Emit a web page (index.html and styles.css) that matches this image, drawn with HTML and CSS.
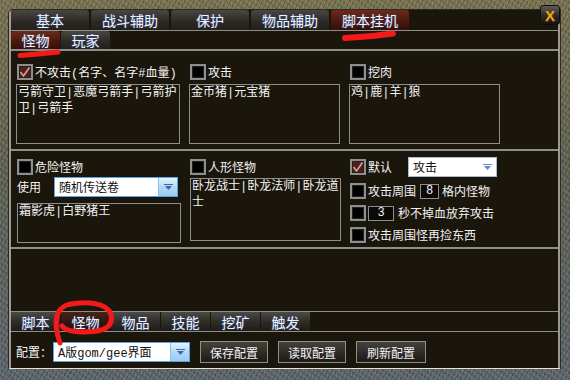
FILE: index.html
```html
<!DOCTYPE html>
<html lang="zh">
<head>
	<meta charset="UTF-8">
	<title>脚本挂机</title>
	<link rel="stylesheet" href="styles.css">
</head>
<body>
	<div class="frame">
		<div class="panel">
			<div class="tabs top">
				<span class="tab">基本</span>
				<span class="tab">战斗辅助</span>
				<span class="tab">保护</span>
				<span class="tab">物品辅助</span>
				<span class="tab on">脚本挂机</span>
			</div>
			<div class="tabs sub">
				<span class="tab on">怪物</span>
				<span class="tab">玩家</span>
			</div>

			<div class="sect s1">
				<div class="col">
					<div class="row"><span class="cb on"><svg width="12" height="12" viewBox="0 0 12 12"><polyline points="1.5,6 4.5,10 10.5,1.5" /></svg></span>不攻击(名字、名字#血量)</div>
					<div class="box b1 w1">弓箭守卫|恶魔弓箭手|弓箭护<br>卫|弓箭手</div>
				</div>
				<div class="col">
					<div class="row"><span class="cb"></span>攻击</div>
					<div class="box b1 w2">金币猪|元宝猪</div>
				</div>
				<div class="col">
					<div class="row"><span class="cb"></span>挖肉</div>
					<div class="box b1 w2">鸡|鹿|羊|狼</div>
				</div>
			</div>

			<div class="sect s2">
				<div class="col">
					<div class="row tall"><span class="cb"></span>危险怪物</div>
					<div class="use">
						<span class="lbl">使用</span>
						<div class="sel blue s-use"><span class="val">随机传送卷</span><span class="arr"><svg width="9" height="6" viewBox="0 0 9 6"><rect x="0" y="0" width="9" height="1" /><polygon points="1,2 8,2 4.5,6" /></svg></span></div>
					</div>
					<div class="box b2 w1">霜影虎|白野猪王</div>
				</div>
				<div class="col">
					<div class="row tall"><span class="cb"></span>人形怪物</div>
					<div class="box b3 w2">卧龙战士|卧龙法师|卧龙道<br>士</div>
				</div>
				<div class="col opts">
					<div class="row tall">
						<span class="cb on"><svg width="12" height="12" viewBox="0 0 12 12"><polyline points="1.5,6 4.5,10 10.5,1.5" /></svg></span>默认
						<div class="sel plain s-mode"><span class="val">攻击</span><span class="tri"><svg width="9" height="6" viewBox="0 0 9 6"><rect x="0" y="0" width="9" height="1" /><polygon points="1,2 8,2 4.5,6" /></svg></span></div>
					</div>
					<div class="row"><span class="cb"></span>攻击周围<span class="num n8">8</span>格内怪物</div>
					<div class="row"><span class="cb"></span><span class="num n3">3</span>秒不掉血放弃攻击</div>
					<div class="row"><span class="cb"></span>攻击周围怪再捡东西</div>
				</div>
			</div>

			<div class="gap"></div>

			<div class="tabs btm">
				<span class="tab">脚本</span>
				<span class="tab on">怪物</span>
				<span class="tab">物品</span>
				<span class="tab">技能</span>
				<span class="tab">挖矿</span>
				<span class="tab">触发</span>
			</div>
			<div class="cfg">
				<span class="lbl">配置：</span>
				<div class="sel blue s-cfg"><span class="val">A版gom/gee界面</span><span class="arr"><svg width="9" height="6" viewBox="0 0 9 6"><rect x="0" y="0" width="9" height="1" /><polygon points="1,2 8,2 4.5,6" /></svg></span></div>
				<button class="btn">保存配置</button>
				<button class="btn">读取配置</button>
				<button class="btn wide">刷新配置</button>
			</div>
		</div>

		<span class="close">X</span>

		<!-- red marks drawn over the window -->
		<svg class="marks" width="570" height="380" viewBox="0 0 570 380">
			<path d="M20 55.5 Q38 54 58 52" />
			<path class="thick" d="M345 38 Q370 37 393 33.5" />
			<path d="M60 343 C55 328 52 310 68 304.5 C86 301 106 302 111 314 C114 327 104 332 84 332 C72 332 65 330 62 326" />
		</svg>
	</div>
</body>
</html>
```

FILE: styles.css
```css
*{
	box-sizing: border-box;
}
body{
	margin: 0;
	background-color: #000;
	font-family: "Liberation Mono", "Noto Sans CJK SC", monospace;
	font-size: 12px;
	color: #f2f2f2;
}
.frame{
	position: relative;
	width: 570px;
	height: 380px;
	padding: 10px 10px 12px 9px;
	background:
		repeating-linear-gradient(37deg, rgba(255,255,230,.08) 0 2px, transparent 2px 5px),
		repeating-linear-gradient(-61deg, rgba(0,0,0,.2) 0 1px, transparent 1px 4px),
		repeating-linear-gradient(90deg, rgba(255,255,255,.05) 0 1px, transparent 1px 3px),
		linear-gradient(#77704e, #5c5e50 45%, #5a626a);
}
.panel{
	height: 100%;
	display: flex;
	flex-direction: column;
	background-color: #1a160c;
	border-left: 2px solid #a09e94;
	border-right: 2px solid #9a9890;
	border-top-left-radius: 4px;
	box-shadow: 0 1px 0 #e2e2da, 0 0 0 1px #2a2a24;
}

/* tabs */
.tabs{
	display: flex;
}
.tab{
	display: flex;
	align-items: center;
	justify-content: center;
	font-family: "Noto Sans CJK SC", sans-serif;
	font-size: 14px;
	color: #eef3ff;
	text-shadow: 0 0 2px #3a5a9a;
	background: linear-gradient(#4a4743, #2c2925 60%, #24211d);
	border-radius: 3px 3px 0 0;
}
.tab.on{
	background: linear-gradient(#6e2a1a, #47170c 60%, #36100a);
}
.top{
	height: 21px;
	gap: 2px;
	border-bottom: 1px solid #8e8e8a;
}
.top .tab{
	width: 78px;
}
.sub{
	height: 20px;
	gap: 1px;
	border-bottom: 2px solid #8e8e8a;
}
.sub .tab{
	width: 49px;
}
.btm{
	height: 21px;
	gap: 1px;
	border-top: 1px solid #8e8e8a;
	border-bottom: 1px solid #8e8e8a;
}
.btm .tab{
	width: 49px;
	border-radius: 0;
	background: linear-gradient(#4c4a46, #2e2b27 55%, #1e1c18);
}
.btm .tab.on{
	background: linear-gradient(#4a2216, #30140c 60%, #22100a);
}

/* sections */
.sect{
	display: grid;
	grid-template-columns: 173px 160px 1fr;
	align-items: start;
	padding-left: 5px;
	border-bottom: 2px solid #8e8e8a;
}
.s1{
	height: 100px;
	padding-top: 12px;
}
.s2{
	height: 98px;
	padding-top: 6px;
}
.col{
	display: flex;
	flex-direction: column;
}
.row{
	display: flex;
	align-items: center;
	height: 18px;
	padding-left: 1px;
	white-space: nowrap;
}
.row.tall{
	height: 20px;
}
.cb{
	width: 16px;
	height: 16px;
	margin-right: 2px;
	flex: none;
	display: flex;
	align-items: center;
	justify-content: center;
	background-color: #000;
	border: 2px solid #8e8e8e;
	box-shadow: inset 0 0 0 1px #222;
}
.cb.on{
	background-color: #5c1a18;
}
.cb svg polyline{
	fill: none;
	stroke: #bfae96;
	stroke-width: 1.6;
}
.box{
	border: 1px solid #8e8e8e;
	padding: 0 0 0 1px;
	line-height: 16px;
	color: #f4f4f4;
}
.b1{
	height: 60px;
	margin-top: 3px;
}
.b2{
	height: 40px;
	margin-top: 6px;
	margin-left: 1px;
}
.b3{
	height: 63px;
	margin-top: 1px;
	margin-left: 1px;
}
.w1{
	width: 164px;
}
.w2{
	width: 151px;
}

/* selects */
.use{
	display: flex;
	align-items: center;
	height: 20px;
}
.lbl{
	flex: none;
	padding-left: 1px;
	width: 38px;
}
.sel{
	display: flex;
	align-items: center;
	height: 20px;
	background-color: #fff;
	color: #111;
}
.sel .val{
	flex: 1;
	padding-left: 4px;
	white-space: nowrap;
}
.blue{
	border: 1px solid #5aa2e0;
}
.plain{
	border: 1px solid #a8bccf;
}
.arr{
	width: 19px;
	height: 100%;
	display: flex;
	align-items: center;
	justify-content: center;
	border-left: 1px solid #8cc0ec;
	background: linear-gradient(#e6f3fd, #b4d8f6 50%, #9ccbf2);
}
.arr svg{
	fill: #3a6aa8;
}
.tri{
	width: 18px;
	display: flex;
	justify-content: center;
}
.tri svg{
	fill: #5a8ec4;
}
.s-use{
	width: 124px;
}
.s-mode{
	width: 89px;
	margin-left: 16px;
}
.s-cfg{
	width: 137px;
}

/* right column options */
.opts{
	gap: 6px;
}
.opts .row{
	height: 16px;
}
.opts .row.tall{
	height: 20px;
}
.num{
	display: inline-flex;
	align-items: center;
	justify-content: center;
	height: 15px;
	border: 1px solid #8e8e8e;
	background-color: #0c0a06;
}
.n8{
	width: 19px;
	margin: 0 3px 0 4px;
}
.n3{
	width: 26px;
	margin: 0 4px 0 0;
}

.gap{
	flex: 1;
}

/* config row */
.cfg{
	height: 36px;
	display: flex;
	align-items: center;
	padding: 4px 0 0 4px;
}
.cfg .lbl{
	width: 38px;
}
.btn{
	height: 22px;
	width: 68px;
	margin-left: 10px;
	padding: 0;
	font-family: "Noto Sans CJK SC", sans-serif;
	font-size: 12px;
	color: #f2f2f2;
	background: linear-gradient(#45423d, #2c2924 60%, #1c1a16);
	border: 1px solid #8e8e8a;
	cursor: pointer;
}
.btn.wide{
	width: 70px;
}

/* close button over the frame */
.close{
	position: absolute;
	left: 540px;
	top: 5px;
	width: 20px;
	height: 20px;
	display: flex;
	align-items: center;
	justify-content: center;
	font-family: "Liberation Sans", sans-serif;
	font-weight: bold;
	font-size: 15px;
	color: #eaa41a;
	text-shadow: 0 1px 0 #6a3a00;
	background: linear-gradient(#5c5c58, #2a2a28 55%, #141412);
	border: 1px solid #10100e;
	border-radius: 3px;
}

/* hand-drawn red marks */
.marks{
	position: absolute;
	left: 0;
	top: 0;
	pointer-events: none;
}
.marks path{
	fill: none;
	stroke: #f41a1a;
	stroke-width: 5;
	stroke-linecap: round;
	stroke-linejoin: round;
}
.marks .thick{
	stroke-width: 6;
}
```
